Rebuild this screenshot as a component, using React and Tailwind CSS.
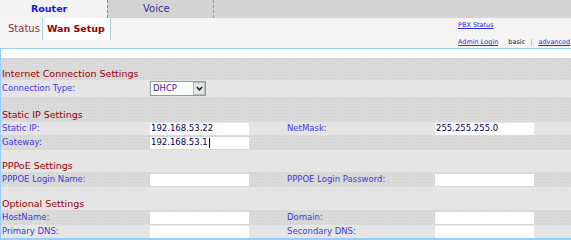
import React from "react";

const LBL = "text-[8.5px] leading-none text-[#3c3cdc] whitespace-nowrap";
const HEAD = "text-[9.5px] leading-none text-[#990000] whitespace-nowrap pl-[1px]";
const PAT = "bg-[#dadada] bg-[radial-gradient(#d0d0d0_0.8px,transparent_0.9px)] bg-[size:3px_3px]";
const LIGHT = "bg-[#e5e5e5]";

function Input({ value, caret, h = "h-[12px]" }) {
  return (
    <div className={`w-[99px] ${h} bg-white flex items-center pl-[1px] text-[8.5px] leading-none text-[#000055] whitespace-nowrap`}>
      {value}
      {caret && <span className="inline-block w-[1px] h-[10px] bg-black ml-[1px]" />}
    </div>
  );
}

function FieldRow({ bg, h, l1, v1, caret1, l2, v2, twoCols = true }) {
  return (
    <div className={`flex items-center ${h} ${bg}`}>
      <div className={`w-[149px] pl-[1px] ${LBL}`}>{l1}</div>
      <Input value={v1} caret={caret1} />
      {twoCols && (
        <>
          <div className={`w-[38px]`} />
          <div className={`w-[148px] ${LBL}`}>{l2}</div>
          <Input value={v2} />
        </>
      )}
    </div>
  );
}

function HeadRow({ bg, h, pb, children }) {
  return (
    <div className={`flex items-end ${h} ${bg} ${pb}`}>
      <div className={HEAD}>{children}</div>
    </div>
  );
}

export default function App() {
  return (
    <div className="w-[571px] h-[240px] overflow-hidden bg-[#e5e5e5] font-['DejaVu_Sans',sans-serif]">
      {/* Top tabs */}
      <div className="flex h-[18px] bg-[#d5d5d5]">
        <div className="w-[107px] bg-[#f3f3f3] flex items-center pl-[31px] text-[9.5px] font-bold text-[#1414f0] leading-none">
          Router
        </div>
        <div className="w-[107px] border-l border-l-[#8c8c8c] border-r border-r-[#9a9a9a] border-dashed border-l-solid bg-[#d3d3d3] flex items-center pl-[35px] text-[10px] text-[#333399] leading-none">
          Voice
        </div>
        <div className="flex-1" />
      </div>

      {/* Sub tabs */}
      <div className="flex h-[30px] bg-[#f4f4f4]">
        <div className="h-[22px] flex items-center pl-[8px] pr-[2px] text-[10px] leading-none text-[#993333]">
          Status
        </div>
        <div className="h-[22px] w-[69px] bg-white border-x border-[#a6d2ff] flex items-center pl-[4px] text-[9.5px] font-bold leading-none text-[#990000]">
          Wan Setup
        </div>
        <div className="ml-auto w-[113px] flex flex-col pt-[3px] text-[6.5px] leading-[8px] whitespace-nowrap">
          <span className="text-[#2a2ae0] underline decoration-[#2a2ae0] underline-offset-[1px]">PBX Status</span>
          <div className="mt-[9px] flex items-center whitespace-nowrap">
            <span className="shrink-0 text-[#4b2ad6] underline decoration-[#8a1a8a] underline-offset-[1px]">Admin Login</span>
            <span className="shrink-0 ml-[10px] text-[#222]">basic</span>
            <span className="shrink-0 ml-[5px] text-[#999]">|</span>
            <span className="shrink-0 ml-[6px] text-[#2a2ae0] underline decoration-[#2a2ae0] underline-offset-[1px]">advanced</span>
          </div>
        </div>
      </div>

      {/* Panel */}
      <div className="border-t border-l border-b-2 border-[#99ccff]">
        <div className="h-[9px] bg-white" />
        <div className="h-[1px] bg-[#d2d2d2]" />

        <HeadRow bg={PAT} h="h-[21px]" pb="pb-[2px]">Internet Connection Settings</HeadRow>

        <div className={`flex items-center h-[17px] ${LIGHT}`}>
          <div className={`w-[149px] pl-[1px] ${LBL}`}>Connection Type:</div>
          <div className="w-[56px] h-[15px] bg-white border border-[#8a9cb4] flex items-center">
            <span className="flex-1 pl-[2px] text-[8.5px] leading-none text-[#3a1a9a]">DHCP</span>
            <div className="w-[12px] h-[13px] bg-[#e6e6e6] border border-[#b9b9b9] flex items-center justify-center">
              <svg width="7" height="5" viewBox="0 0 7 5">
                <polyline points="0.8,1 3.5,3.8 6.2,1" fill="none" stroke="#222" strokeWidth="1.6" />
              </svg>
            </div>
          </div>
        </div>

        <HeadRow bg={PAT} h="h-[25px]" pb="pb-[3px]">Static IP Settings</HeadRow>

        <FieldRow bg={LIGHT} h="h-[13px]" l1="Static IP:" v1="192.168.53.22" l2="NetMask:" v2="255.255.255.0" />
        <div className={`flex items-center h-[15px] ${PAT}`}>
          <div className={`w-[149px] pl-[1px] ${LBL}`}>Gateway:</div>
          <Input value="192.168.53.1" caret />
        </div>

        <HeadRow bg={LIGHT} h="h-[22px]" pb="pb-[2px]">PPPoE Settings</HeadRow>

        <FieldRow bg={PAT} h="h-[15px]" l1="PPPOE Login Name:" v1="" l2="PPPOE Login Password:" v2="" />

        <HeadRow bg={LIGHT} h="h-[23px]" pb="pb-[2px]">Optional Settings</HeadRow>

        <FieldRow bg={PAT} h="h-[15px]" l1="HostName:" v1="" l2="Domain:" v2="" />
        <FieldRow bg={LIGHT} h="h-[13px]" l1="Primary DNS:" v1="" l2="Secondary DNS:" v2="" />
      </div>
    </div>
  );
}
